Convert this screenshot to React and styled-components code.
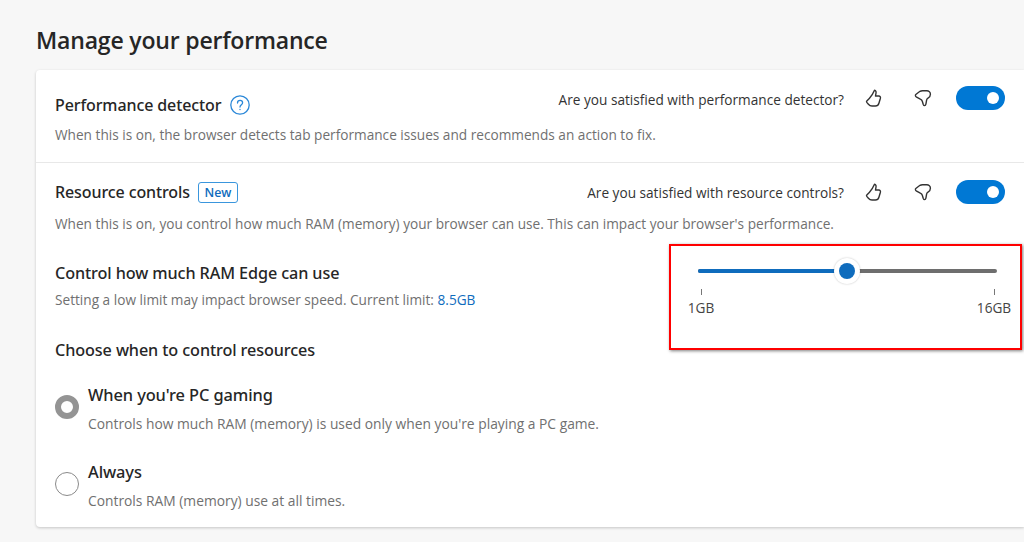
import React from 'react';
import styled, { createGlobalStyle } from 'styled-components';

const Global = createGlobalStyle`
  html, body { margin: 0; padding: 0; background: #f7f7f7; overflow: hidden; }
  body { font-family: "Open Sans", "Noto Sans", sans-serif; color: #262626; }
`;
const Page = styled.div`
  width: 1024px; height: 542px; box-sizing: border-box; padding: 25px 0 0 36px; overflow: hidden;
`;
const Title = styled.h1`
  margin: 0 0 14px; font-size: 23.05px; line-height: 31px; font-weight: 600; letter-spacing: -0.2px; color: #262626;
`;
const Card = styled.div`
  position: relative; width: 988px; height: 457px; background: #fff; border-radius: 4px 0 0 4px;
  box-shadow: 0 1px 3px rgba(0,0,0,.2);
`;
const Section = styled.section`
  box-sizing: border-box; height: ${p => p.$h}px; padding: ${p => p.$pt}px 19px 0;
  border-bottom: ${p => p.$line ? '1px solid #e8e8e8' : 'none'};
`;
const Row = styled.div`
  display: flex; align-items: flex-start; justify-content: space-between; height: 26px;
`;
const Left = styled.div`display: flex; align-items: center; height: 26px; margin-top: ${p => p.$drop || 0}px;`;
const Heading = styled.span`
  font-size: 16px; font-weight: 500; color: #262626; letter-spacing: -0.1px; white-space: nowrap;
  font-family: "Noto Sans", sans-serif;
`;
const Badge = styled.span`
  margin-left: 8px; height: 21px; width: 40px; box-sizing: border-box; border: 1px solid #3a96dd; border-radius: 3px;
  font-size: 12.4px; font-weight: 600; color: #0f6cbd; display: flex; align-items: center; justify-content: center;
`;
const Right = styled.div`display: flex; align-items: center; height: 26px;`;
const Question = styled.span`
  font-size: 13.65px; color: #333; white-space: nowrap; margin: ${p => p.$drop || 0}px 20px 0 0;
`;
const IconSlot = styled.span`
  width: 20px; height: 20px; display: flex; align-items: center; justify-content: center; margin-right: ${p => p.$mr}px;
`;
const Toggle = styled.span`
  width: 49px; height: 24px; border-radius: 12px; background: #0078d4; display: flex; align-items: center;
  justify-content: flex-end; padding-right: 6px; box-sizing: border-box;
`;
const Knob = styled.span`width: 12px; height: 12px; border-radius: 50%; background: #fff;`;
const Desc = styled.p`
  margin: ${p => p.$mt}px 0 0; font-size: 13.65px; line-height: 18px; color: #707070; white-space: nowrap;
`;
const Split = styled.div`
  display: flex; justify-content: space-between; margin-top: 29px;
`;
const SubHeading = styled.h3`
  margin: 0; font-size: 16.2px; line-height: 22px; font-weight: 500; color: #262626; white-space: nowrap;
  font-family: "Noto Sans", sans-serif; letter-spacing: -0.1px;
`;
const Limit = styled.a`color: #0f6cbd;`;
const SliderBox = styled.div`
  width: 319px; margin-right: -2px; padding-top: 7px;
`;
const Track = styled.div`
  position: relative; margin: 0 10px 0 10px; height: 4px; border-radius: 2px; background: #6e6e6e;
`;
const Fill = styled.div`
  height: 4px; border-radius: 2px; background: #0f6cbd; width: 50%;
`;
const Thumb = styled.div`
  position: absolute; left: 136px; top: -11px; width: 26px; height: 26px; box-sizing: border-box; border-radius: 50%;
  background: #fff; box-shadow: 0 0 2px rgba(0,0,0,.25); display: flex; align-items: center; justify-content: center;
`;
const Dot = styled.div`width: 16px; height: 16px; border-radius: 50%; background: #0f6cbd;`;
const Ticks = styled.div`
  display: flex; justify-content: space-between; margin: 16px 0 0; font-size: 13.65px; line-height: 18px; color: #444;
`;
const Tick = styled.div`
  display: flex; flex-direction: column; align-items: center; width: 26px;
  &::before { content: ""; width: 1px; height: 6px; background: #777; margin-bottom: 4px; }
`;
const Choices = styled.div`margin-top: 22px;`;
const Choice = styled.div`
  display: flex; align-items: center; height: 49px; margin-top: ${p => p.$mt}px;
`;
const Radio = styled.span`
  width: 24px; height: 24px; border-radius: 50%; box-sizing: border-box; margin: 0 9px 4px 0; flex: none;
  border: ${p => p.$on ? '6.5px solid #949494' : '1px solid #8a8a8a'}; background: #fff;
`;
const ChoiceTitle = styled.div`
  font-size: 16.4px; line-height: 22px; font-weight: 500; color: #262626; font-family: "Noto Sans", sans-serif; letter-spacing: -0.1px;
`;
const ChoiceDesc = styled.div`font-size: 13.82px; line-height: 18px; color: #707070; margin-top: 9px; white-space: nowrap;`;
const Highlight = styled.div`
  position: absolute; left: 633px; top: 174px; width: 353px; height: 106px; box-sizing: border-box;
  border: 2px solid #f00; box-shadow: 1px 1px 3px rgba(0,0,0,.5); pointer-events: none;
`;

const Help = () => (
  <svg width="20" height="20" viewBox="0 0 20 20" style={{ marginLeft: 9 }} fill="none" stroke="#2b88d8" strokeWidth="1.3">
    <circle cx="10" cy="10" r="9.200" />
    <path d="M7.500 8c0-1.600 1.100-2.600 2.600-2.600S12.600 6.400 12.600 7.800c0 1.900-2.600 2-2.600 4.200" strokeLinecap="round" />
    <circle cx="10" cy="14.500" r=".7" fill="#2b88d8" stroke="none" />
  </svg>
);
const ThumbUp = () => (
  <svg width="18" height="18" viewBox="0 0 18 18" fill="none" stroke="#333" strokeWidth="1.4" strokeLinejoin="round">
    <path d="M9.500 1.200c1.300.2 1.800 1.500 1.500 3L10.500 7h3.300c1.200 0 1.900 1.100 1.600 2.200l-1.500 5c-.5 1.800-1.500 2.800-3.500 2.800H7c-1.600 0-2.600-.6-3.600-1.800L1.800 13.400c-.4-.5-.4-1 0-1.400l2.500-2.600c1.800-1.900 3.500-4.200 5.200-8.200z" />
  </svg>
);
const ThumbDown = () => (
  <svg width="18" height="18" viewBox="0 0 18 18" fill="none" stroke="#333" strokeWidth="1.4" strokeLinejoin="round">
    <path d="M1.800 5.500 6 2.300C6.800 1.800 7.500 1.700 8.500 1.700h4.300c2 0 3.600 1.600 3.600 3.500 0 1.900-1 3.200-2.400 4-.9.500-1.200 1-1.400 1.900l-.7 4c-.2 1-.7 1.500-1.300 1.500-.6 0-1.100-.5-1.400-1.400l-.9-3c-.3-1-1-1.600-2-2L2.200 7.900C1.300 7.500 1.200 6 1.800 5.500z" />
  </svg>
);
const Feedback = ({ q, drop }) => (
  <Right>
    <Question $drop={drop}>{q}</Question>
    <IconSlot $mr={29}><ThumbUp /></IconSlot>
    <IconSlot $mr={23}><ThumbDown /></IconSlot>
    <Toggle><Knob /></Toggle>
  </Right>
);

export default function App() {
  return (
    <Page>
      <Global />
      <Title>Manage your performance</Title>
      <Card>
        <Section $h={93} $pt={15} $line>
          <Row>
            <Left $drop={7}><Heading>Performance detector</Heading><Help /></Left>
            <Feedback q="Are you satisfied with performance detector?" drop={2} />
          </Row>
          <Desc $mt={15}>When this is on, the browser detects tab performance issues and recommends an action to fix.</Desc>
        </Section>
        <Section $h={364} $pt={16}>
          <Row>
            <Left><Heading>Resource controls</Heading><Badge>New</Badge></Left>
            <Feedback q="Are you satisfied with resource controls?" />
          </Row>
          <Desc $mt={10}>When this is on, you control how much RAM (memory) your browser can use. This can impact your browser's performance.</Desc>
          <Split>
            <div>
              <SubHeading>Control how much RAM Edge can use</SubHeading>
              <Desc $mt={7}>Setting a low limit may impact browser speed. Current limit: <Limit>8.5GB</Limit></Desc>
            </div>
            <SliderBox>
              <Track><Fill /><Thumb><Dot /></Thumb></Track>
              <Ticks><Tick>1GB</Tick><Tick>16GB</Tick></Ticks>
            </SliderBox>
          </Split>
          <Choices>
            <SubHeading>Choose when to control resources</SubHeading>
            <Choice $mt={23}>
              <Radio $on />
              <div><ChoiceTitle>When you're PC gaming</ChoiceTitle><ChoiceDesc>Controls how much RAM (memory) is used only when you're playing a PC game.</ChoiceDesc></div>
            </Choice>
            <Choice $mt={28}>
              <Radio />
              <div><ChoiceTitle>Always</ChoiceTitle><ChoiceDesc>Controls RAM (memory) use at all times.</ChoiceDesc></div>
            </Choice>
          </Choices>
        </Section>
        <Highlight />
      </Card>
    </Page>
  );
}
